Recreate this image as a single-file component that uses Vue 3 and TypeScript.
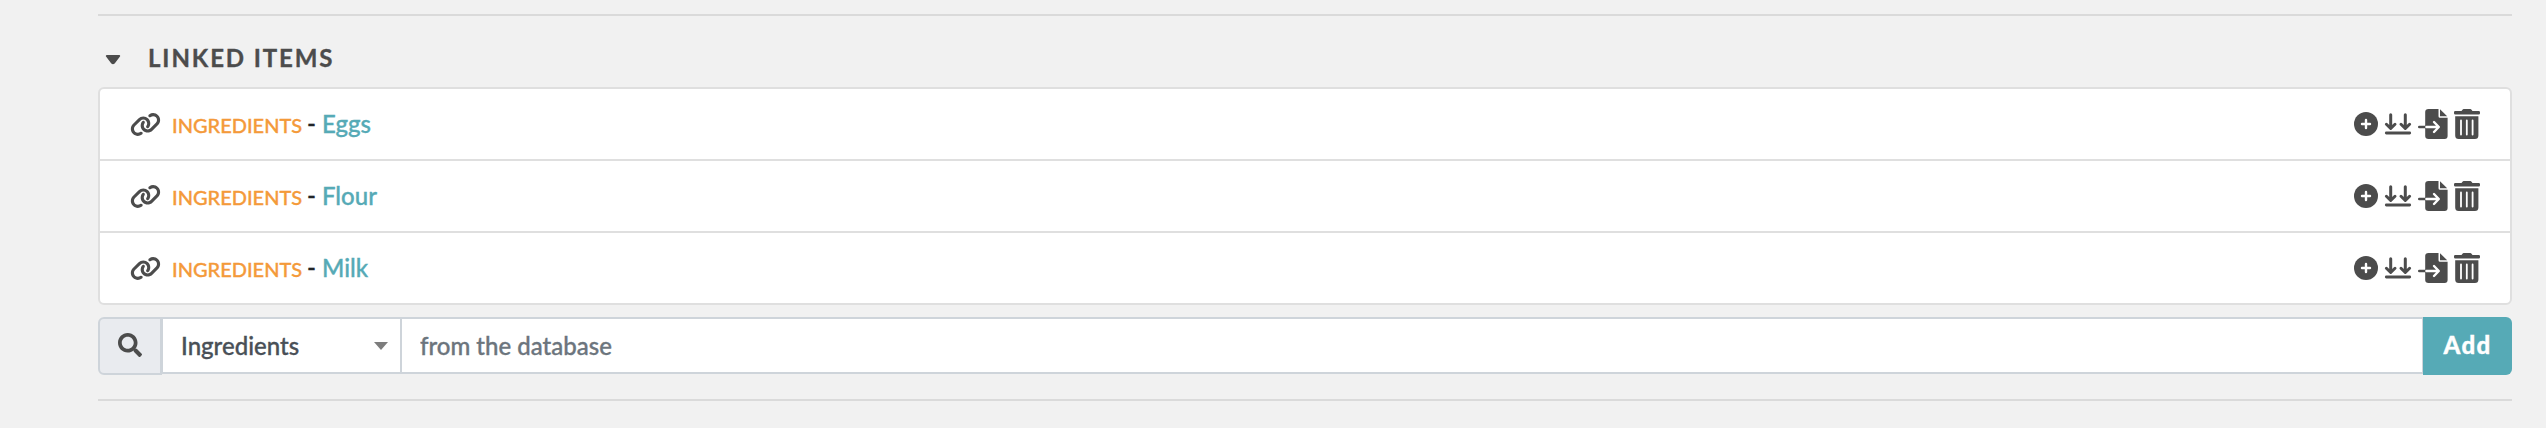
<script setup lang="ts">
import { ref } from 'vue'

interface LinkedItem {
  id: number
  category: string
  title: string
}

const items = ref<LinkedItem[]>([
  { id: 1, category: 'INGREDIENTS', title: 'Eggs' },
  { id: 2, category: 'INGREDIENTS', title: 'Flour' },
  { id: 3, category: 'INGREDIENTS', title: 'Milk' },
])
</script>

<template>
  <section class="linked">
    <h2 class="heading">
      <svg class="caret" width="16" height="10" viewBox="0 0 16 10"><path d="M1.8 1H14.2L8.9 7.9Q8 8.8 7.1 7.9Z" /></svg>
      <span class="heading-text">LINKED ITEMS</span>
    </h2>
    <ul class="list">
      <li v-for="item in items" :key="item.id" class="row">
        <svg class="link" viewBox="0 0 640 512"><path d="M579.8 267.7c56.5-56.5 56.5-148 0-204.5c-50-50-128.8-56.5-186.3-15.4l-1.6 1.1c-14.4 10.3-17.7 30.3-7.4 44.6s30.3 17.7 44.6 7.4l1.6-1.1c32.1-22.9 76-19.3 103.8 8.6c31.5 31.5 31.5 82.5 0 114L422.3 334.8c-31.5 31.5-82.5 31.5-114 0c-27.9-27.9-31.5-71.8-8.6-103.8l1.1-1.6c10.3-14.4 6.9-34.4-7.4-44.6s-34.4-6.9-44.6 7.4l-1.1 1.6C206.5 251.2 213 330 263 380c56.5 56.5 148 56.5 204.5 0L579.8 267.7zM60.2 244.3c-56.5 56.5-56.5 148 0 204.5c50 50 128.8 56.5 186.3 15.4l1.6-1.1c14.4-10.3 17.7-30.3 7.4-44.6s-30.3-17.7-44.6-7.4l-1.6 1.1c-32.1 22.9-76 19.3-103.8-8.6C74 372 74 321 105.5 289.5L217.7 177.2c31.5-31.5 82.5-31.5 114 0c27.9 27.9 31.5 71.8 8.6 103.9l-1.1 1.6c-10.3 14.4-6.9 34.4 7.4 44.6s34.4 6.9 44.6-7.4l1.1-1.6C433.5 260.8 427 182 377 132c-56.5-56.5-148-56.5-204.5 0L60.2 244.3z" /></svg>
        <span class="label"><span class="category">{{ item.category }}</span><span class="dash">-</span><a class="title">{{ item.title }}</a></span>
        <span class="actions">
          <svg class="plus" width="24" height="24" viewBox="0 0 24 24"><circle cx="12" cy="12" r="12" /><path class="cut" d="M12 8v8M8 12h8" /></svg>
          <svg class="insert" width="28" height="24" viewBox="0 0 28 24"><path class="line" d="M5.7 2.8V16M1.4 12.3L5.7 16.5L10 12.3M20.3 2.8V16M16 12.3L20.3 16.5L24.6 12.3" /><path class="line bar" d="M1.3 21H24.7" /></svg>
          <svg class="file" width="30" height="32" viewBox="0 0 30 32"><path d="M10.500 1H20.500V8.200Q20.500 9.700 22 9.700H29.600V28Q29.600 31 26.600 31H10.500Q7.200 31 7.200 28V4Q7.200 1 10.500 1ZM22 1.200L29.200 8.200H22Z" /><path class="shaft" d="M1.300 19H7" /><path class="cut" d="M8.400 19H20.300M16 14L20.800 19L16 24" /></svg>
          <svg class="trash" width="26" height="32" viewBox="0 0 26 32"><path d="M1.3 3H7.5L8.7 1.4Q9 1 9.6 1H16.4Q17 1 17.3 1.4L18.5 3H24.7Q26 3 26 4.3V5.3Q26 6.500 24.7 6.500H1.3Q0 6.500 0 5.3V4.3Q0 3 1.3 3ZM1.2 8.3H24.4V27.5Q24.4 31 20.9 31H4.7Q1.2 31 1.2 27.5Z" /><path class="slot" d="M7 12.5v14M12.8 12.5v14M18.600 12.5v14" /></svg>
        </span>
      </li>
    </ul>
    <div class="group">
      <span class="addon">
        <svg width="24" height="24" viewBox="0 0 512 512"><path d="M505 442.7L405.3 343c-4.5-4.5-10.6-7-17-7H372c27.6-35.3 44-79.7 44-128C416 93.1 322.9 0 208 0S0 93.1 0 208s93.1 208 208 208c48.3 0 92.7-16.4 128-44v16.3c0 6.4 2.5 12.5 7 17l99.7 99.7c9.4 9.4 24.6 9.4 33.9 0l28.3-28.3c9.4-9.4 9.4-24.6.1-34zM208 336c-70.7 0-128-57.2-128-128 0-70.7 57.2-128 128-128 70.7 0 128 57.2 128 128 0 70.7-57.2 128-128 128z" /></svg>
      </span>
      <div class="select">
        <span class="select-text">Ingredients</span>
        <svg width="14" height="8" viewBox="0 0 14 8"><path d="M0 0H14L7 8Z" /></svg>
      </div>
      <input class="search" type="text" placeholder="from the database" />
      <button class="add" type="button">Add</button>
    </div>
  </section>
</template>

<style>
body {
  margin: 0;
  background: #f1f1f1;
}
</style>

<style scoped>
.linked {
  box-sizing: border-box;
  width: 2414px;
  height: 387px;
  margin: 14px 0 0 98px;
  border-top: 2px solid #dadada;
  border-bottom: 2px solid #dadada;
  font-family: Lato, "Liberation Sans", sans-serif;
  font-size: 24px;
  font-weight: 500;
  color: #212529;
  -webkit-text-stroke: 0.35px currentColor;
}
.heading {
  display: flex;
  align-items: center;
  box-sizing: border-box;
  height: 71px;
  margin: 0;
  padding: 14px 0 0 7px;
  font-size: 24px;
  font-weight: 700;
  letter-spacing: 1.9px;
  color: #4c4c4c;
}
.heading-text {
  margin-bottom: 2px;
}
.caret {
  margin: 2px 27px 0 0;
  fill: #4c4c4c;
  stroke: #4c4c4c;
  stroke-width: 2;
  stroke-linejoin: round;
}
.list {
  box-sizing: border-box;
  height: 218px;
  margin: 0;
  padding: 0;
  list-style: none;
  background: #fff;
  border: 2px solid #dfdfdf;
  border-radius: 6px;
}
.row {
  display: flex;
  align-items: center;
  box-sizing: border-box;
  height: 72px;
  padding: 0 30px 0 29.5px;
  border-bottom: 2px solid #dfdfdf;
}
.row:last-child {
  height: 70px;
  border-bottom: 0;
}
.link {
  width: 31px;
  height: 25px;
  margin-right: 11.5px;
  fill: #4c4c4c;
}
.label {
  display: flex;
  flex: 1;
  align-items: baseline;
  line-height: 30px;
}
.category {
  width: 135px;
  font-size: 20px;
  color: #f49a3a;
}
.dash {
  width: 15px;
}
.title {
  color: #56aab6;
}
.actions {
  display: flex;
  align-items: center;
  height: 32px;
  fill: #4c4c4c;
}
.plus {
  margin-right: 7px;
}
.insert {
  margin-right: 5px;
  overflow: visible;
}
.file {
  margin-right: 6px;
}
.cut {
  fill: none;
  stroke: #fff;
  stroke-width: 2.4;
  stroke-linecap: round;
  stroke-linejoin: round;
}
.line {
  fill: none;
  stroke: #4c4c4c;
  stroke-width: 3;
  stroke-linecap: round;
  stroke-linejoin: round;
}
.bar {
  stroke-width: 2.8;
}
.shaft {
  stroke: #4c4c4c;
  stroke-width: 2.6;
  stroke-linecap: round;
}
.slot {
  stroke: #fff;
  stroke-width: 1.8;
  stroke-linecap: round;
}
.group {
  display: flex;
  height: 58px;
  margin-top: 12px;
}
.addon {
  display: flex;
  align-items: center;
  box-sizing: border-box;
  width: 64px;
  padding: 0 0 3px 18px;
  background: #e9ebef;
  border: 2px solid #ced4da;
  border-radius: 6px 0 0 6px;
  fill: #4c4c4c;
}
.select {
  display: flex;
  align-items: center;
  justify-content: space-between;
  box-sizing: border-box;
  width: 238px;
  height: 57px;
  padding: 0 12px 0 18px;
  background: #fff;
  border: 2px solid #ced4da;
  border-left-width: 1px;
  border-right: 0;
  color: #495057;
}
.select-text {
  margin-bottom: 1px;
}
.select svg {
  fill: #7d7d7d;
}
.search {
  flex: 1;
  box-sizing: border-box;
  height: 57px;
  margin: 0;
  padding: 0 18px 1px;
  background: #fff;
  border: 2px solid #ced4da;
  border-right-width: 1px;
  border-radius: 0;
  font: inherit;
  outline: 0;
}
.search::placeholder {
  color: #6c757d;
  opacity: 1;
}
.add {
  width: 89px;
  height: 58px;
  padding: 0 0 3px;
  background: #56aab6;
  border: 0;
  border-radius: 0 6px 6px 0;
  font: inherit;
  font-weight: 900;
  letter-spacing: 1.3px;
  color: #fff;
}
</style>
